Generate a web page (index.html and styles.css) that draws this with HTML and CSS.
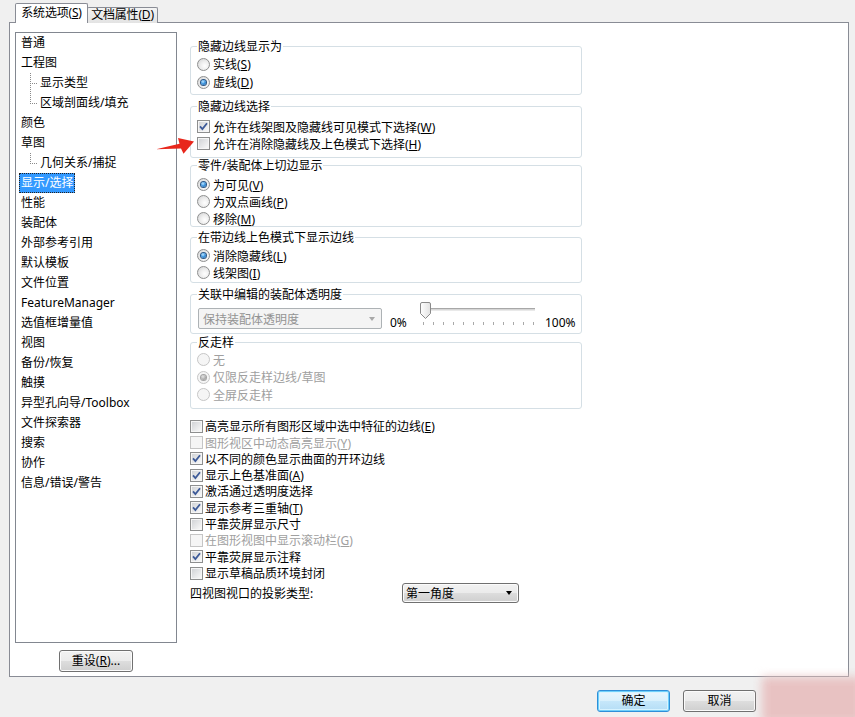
FILE: index.html
```html
<!DOCTYPE html>
<html lang="zh-CN">
<head>
<meta charset="utf-8">
<title>系统选项</title>
<link rel="stylesheet" href="styles.css">
</head>
<body>
<div class="window">
  <div class="tabs">
    <div class="tab active">系统选项(<u>S</u>)</div>
    <div class="tab">文档属性(<u>D</u>)</div>
  </div>
  <div class="panel">
    <div class="left">
      <ul class="tree">
        <li><span>普通</span></li>
        <li><span>工程图</span></li>
        <li class="child"><span>显示类型</span></li>
        <li class="child last"><span>区域剖面线/填充</span></li>
        <li><span>颜色</span></li>
        <li><span>草图</span></li>
        <li class="child last"><span>几何关系/捕捉</span></li>
        <li class="sel"><span>显示/选择</span></li>
        <li><span>性能</span></li>
        <li><span>装配体</span></li>
        <li><span>外部参考引用</span></li>
        <li><span>默认模板</span></li>
        <li><span>文件位置</span></li>
        <li><span>FeatureManager</span></li>
        <li><span>选值框增量值</span></li>
        <li><span>视图</span></li>
        <li><span>备份/恢复</span></li>
        <li><span>触摸</span></li>
        <li><span>异型孔向导/Toolbox</span></li>
        <li><span>文件探索器</span></li>
        <li><span>搜索</span></li>
        <li><span>协作</span></li>
        <li><span>信息/错误/警告</span></li>
      </ul>
      <button class="btn reset">重设(<u>R</u>)...</button>
    </div>

    <div class="content">
      <div class="grp g1">
        <div class="gt">隐藏边线显示为</div>
        <div class="opts">
          <div class="opt"><span class="radio"></span><span>实线(<u>S</u>)</span></div>
          <div class="opt"><span class="radio on"></span><span>虚线(<u>D</u>)</span></div>
        </div>
      </div>

      <div class="grp g2">
        <div class="gt">隐藏边线选择</div>
        <div class="opts">
          <div class="opt"><span class="chk"><svg width="9" height="9" viewBox="0 0 9 9"><path d="M1 4.3 L3.4 7 L8 1.2" fill="none" stroke="#3d5a98" stroke-width="1.8"/></svg></span><span>允许在线架图及隐藏线可见模式下选择(<u>W</u>)</span></div>
          <div class="opt"><span class="chk"></span><span>允许在消除隐藏线及上色模式下选择(<u>H</u>)</span></div>
        </div>
      </div>

      <div class="grp g3">
        <div class="gt">零件/装配体上切边显示</div>
        <div class="opts">
          <div class="opt"><span class="radio on"></span><span>为可见(<u>V</u>)</span></div>
          <div class="opt"><span class="radio"></span><span>为双点画线(<u>P</u>)</span></div>
          <div class="opt"><span class="radio"></span><span>移除(<u>M</u>)</span></div>
        </div>
      </div>

      <div class="grp g4">
        <div class="gt">在带边线上色模式下显示边线</div>
        <div class="opts">
          <div class="opt"><span class="radio on"></span><span>消除隐藏线(<u>L</u>)</span></div>
          <div class="opt"><span class="radio"></span><span>线架图(<u>I</u>)</span></div>
        </div>
      </div>

      <div class="grp g5">
        <div class="gt">关联中编辑的装配体透明度</div>
        <div class="trow">
          <div class="combo-dis"><span>保持装配体透明度</span><span class="tri gray"></span></div>
          <div class="pct pct0">0%</div>
          <div class="slider">
            <div class="track"></div>
            <div class="ticks"></div>
            <svg class="thumb" width="12" height="18" viewBox="0 0 12 18">
              <defs><linearGradient id="tg" x1="0" y1="0" x2="1" y2="0"><stop offset="0" stop-color="#ffffff"/><stop offset="1" stop-color="#e2e2e2"/></linearGradient></defs>
              <path d="M2 0.5 H9 Q10.5 0.5 10.5 2 V11.5 L5.5 16.5 L0.5 11.5 V2 Q0.5 0.5 2 0.5 Z" fill="url(#tg)" stroke="#8a8a8a"/>
            </svg>
          </div>
          <div class="pct pct100">100%</div>
        </div>
      </div>

      <div class="grp g6">
        <div class="gt">反走样</div>
        <div class="opts">
          <div class="opt dis"><span class="radio"></span><span>无</span></div>
          <div class="opt dis"><span class="radio on"></span><span>仅限反走样边线/草图</span></div>
          <div class="opt dis"><span class="radio"></span><span>全屏反走样</span></div>
        </div>
      </div>

      <div class="checks">
        <div class="crow"><span class="chk"></span><span>高亮显示所有图形区域中选中特征的边线(<u>E</u>)</span></div>
        <div class="crow dis"><span class="chk"></span><span>图形视区中动态高亮显示(<u>Y</u>)</span></div>
        <div class="crow"><span class="chk"><svg width="9" height="9" viewBox="0 0 9 9"><path d="M1 4.3 L3.4 7 L8 1.2" fill="none" stroke="#3d5a98" stroke-width="1.8"/></svg></span><span>以不同的颜色显示曲面的开环边线</span></div>
        <div class="crow"><span class="chk"><svg width="9" height="9" viewBox="0 0 9 9"><path d="M1 4.3 L3.4 7 L8 1.2" fill="none" stroke="#3d5a98" stroke-width="1.8"/></svg></span><span>显示上色基准面(<u>A</u>)</span></div>
        <div class="crow"><span class="chk"><svg width="9" height="9" viewBox="0 0 9 9"><path d="M1 4.3 L3.4 7 L8 1.2" fill="none" stroke="#3d5a98" stroke-width="1.8"/></svg></span><span>激活通过透明度选择</span></div>
        <div class="crow"><span class="chk"><svg width="9" height="9" viewBox="0 0 9 9"><path d="M1 4.3 L3.4 7 L8 1.2" fill="none" stroke="#3d5a98" stroke-width="1.8"/></svg></span><span>显示参考三重轴(<u>T</u>)</span></div>
        <div class="crow"><span class="chk"></span><span>平靠荧屏显示尺寸</span></div>
        <div class="crow dis"><span class="chk"></span><span>在图形视图中显示滚动栏(<u>G</u>)</span></div>
        <div class="crow"><span class="chk"><svg width="9" height="9" viewBox="0 0 9 9"><path d="M1 4.3 L3.4 7 L8 1.2" fill="none" stroke="#3d5a98" stroke-width="1.8"/></svg></span><span>平靠荧屏显示注释</span></div>
        <div class="crow"><span class="chk"></span><span>显示草稿品质环境封闭</span></div>
      </div>

      <div class="proj">
        <span class="proj-label">四视图视口的投影类型:</span>
        <div class="combo"><span>第一角度</span><span class="tri"></span></div>
      </div>
    </div>
  </div>

  <div class="footer">
    <button class="btn default">确定</button>
    <button class="btn">取消</button>
  </div>

  <svg class="arrow" width="42" height="20" viewBox="0 0 42 20">
    <path d="M1 13.2 L24.5 7.8 L23 2 L39 5.5 L28.5 17.8 L26 12.6 Z" fill="#e8271c"/>
  </svg>
  <div class="watermark"></div>
</div>
</body>
</html>
```
FILE: styles.css
```css
* { box-sizing: border-box; }

body {
  margin: 0;
  font-family: "Noto Sans", "Noto Sans CJK SC", sans-serif;
  font-size: 12px;
  color: #000;
}

u { text-decoration: underline; text-underline-offset: 1px; }

.window {
  width: 855px;
  height: 717px;
  background: #f0f0f0;
  position: relative;
  overflow: hidden;
}

/* tabs */
.tabs {
  display: flex;
  align-items: flex-end;
  height: 23px;
  padding-left: 15px;
}
.tab {
  width: 71px;
  height: 16px;
  margin-left: -1px;
  border: 1px solid #898c95;
  border-bottom: none;
  border-radius: 2px 2px 0 0;
  background: linear-gradient(#f4f4f4, #e3e3e3);
  text-align: center;
  line-height: 14px;
  white-space: nowrap;
  letter-spacing: -0.2px;
}
.tab.active {
  width: 73px;
  height: 20px;
  margin-left: 0;
  padding-top: 1px;
  line-height: 16px;
  background: #fff;
  position: relative;
  z-index: 1;
}

/* main panel */
.panel {
  margin: -1px 0 0 9px;
  width: 840px;
  height: 655px;
  border: 1px solid #898c95;
  background: #fff;
  display: flex;
  align-items: flex-start;
  padding-left: 5px;
}

.left {
  margin-top: 9px;
  width: 162px;
  display: flex;
  flex-direction: column;
}

.tree {
  height: 611px;
  margin: 0;
  padding: 0 0 0 3px;
  list-style: none;
  border: 1px solid #828790;
}
.tree li {
  height: 20px;
  position: relative;
  white-space: nowrap;
}
.tree li span {
  display: inline-block;
  height: 20px;
  line-height: 18px;
  padding: 0 1px;
  border: 1px solid transparent;
}
.tree li.sel span {
  background: #3399ff;
  color: #fff;
  border: 1px dotted #222;
}
.tree li.child { padding-left: 19px; }
.tree li.child::before {
  content: "";
  position: absolute;
  left: 11px;
  top: 0;
  bottom: 0;
  width: 1px;
  background: repeating-linear-gradient(#8a8a8a 0 1px, transparent 1px 2px);
}
.tree li.child.last::before { bottom: auto; height: 11px; }
.tree li.child::after {
  content: "";
  position: absolute;
  left: 12px;
  top: 10px;
  width: 7px;
  height: 1px;
  background: repeating-linear-gradient(90deg, transparent 0 1px, #8a8a8a 1px 2px);
}

/* buttons */
.btn {
  width: 73px;
  height: 22px;
  padding: 0;
  border: 1px solid #707070;
  border-radius: 3px;
  background: linear-gradient(#f2f2f2 0%, #ebebeb 50%, #dddddd 51%, #cfcfcf 100%);
  box-shadow: inset 0 0 0 1px #fbfbfb;
  font: inherit;
  color: #000;
  line-height: 18px;
}
.btn.default {
  border-color: #2f8fd8;
  background: linear-gradient(#eaf6fd 0%, #d9f0fc 50%, #c6e7fa 51%, #b4ddf5 100%);
  box-shadow: inset 0 0 0 1px #6fd0fb, inset 0 0 0 2px #d8f3ff;
}
.reset {
  width: 74px;
  margin: 7px 0 0 44px;
}

/* right content */
.content {
  margin: 23px 0 0 13px;
  width: 392px;
}

.grp {
  border: 1px solid #d5dfe5;
  border-radius: 3px;
}
.gt {
  width: max-content;
  margin: -7px 0 0 6px;
  padding: 0 1px;
  background: #fff;
  line-height: 14px;
}
.opts { padding-left: 6px; }
.opt {
  display: flex;
  align-items: center;
  gap: 3px;
  height: 17px;
  white-space: nowrap;
}
.dis { color: #a0a0a0; }

.g1 { height: 49px; }
.g1 .opts { padding-top: 1px; }
.g1 .opt { height: 18px; }
.g2 { height: 52px; margin-top: 11px; }
.g2 .opts { padding-top: 4px; }
.g3 { height: 62px; margin-top: 7px; }
.g3 .opts { padding-top: 3px; }
.g4 { height: 46px; margin-top: 10px; }
.g4 .opts { padding-top: 2px; }
.g5 { height: 40px; margin-top: 11px; }
.g6 { height: 67px; margin-top: 8px; }
.g6 .opts { padding-top: 1px; }
.g6 .opt { height: 17.5px; }

/* radio */
.radio {
  flex: none;
  width: 13px;
  height: 13px;
  border-radius: 50%;
  border: 1px solid #8e8f8f;
  background: radial-gradient(circle at 62% 62%, #ffffff 0, #ededed 45%, #cfd0d1 100%);
  display: flex;
  align-items: center;
  justify-content: center;
}
.radio.on::after {
  content: "";
  width: 5px;
  height: 5px;
  border-radius: 50%;
  background: radial-gradient(circle at 40% 35%, #c3e8ff 0, #3f98e2 45%, #1a5a9c 100%);
  box-shadow: 0 0 0 1px #2a5685;
}
.dis .radio {
  border-color: #c6c6c6;
  background: #f5f5f5;
}
.dis .radio.on::after {
  background: radial-gradient(circle at 40% 35%, #e6e6e6 0, #a9a9a9 60%, #8f8f8f 100%);
  box-shadow: 0 0 0 1px #a3a3a3;
}

/* checkbox */
.chk {
  flex: none;
  width: 13px;
  height: 13px;
  padding: 1px;
  border: 1px solid #8e8f8f;
  background: linear-gradient(135deg, #d2d4d7, #f8f8f8) content-box, #f6f6f6;
  display: flex;
}
.chk svg { display: block; }
.dis .chk {
  border-color: #c5c5c5;
  background: #f5f5f5;
}

/* transparency row */
.trow {
  display: flex;
  align-items: flex-start;
  padding-left: 7px;
  height: 30px;
}
.combo-dis {
  width: 184px;
  height: 21px;
  margin-top: 6px;
  border: 1px solid #adb2b5;
  border-radius: 2px;
  background: #f4f4f4;
  color: #939393;
  display: flex;
  align-items: center;
  justify-content: space-between;
  padding: 0 6px 0 4px;
  white-space: nowrap;
}
.tri {
  width: 0;
  height: 0;
  border-left: 3.5px solid transparent;
  border-right: 3.5px solid transparent;
  border-top: 4px solid #000;
}
.tri.gray { border-top-color: #a8a8a8; }
.pct {
  margin-top: 14px;
  line-height: 14px;
  white-space: nowrap;
}
.pct0 { width: 30px; margin-left: 8px; }
.pct100 { margin-left: 10px; }
.slider {
  position: relative;
  width: 115px;
  height: 28px;
}
.track {
  margin: 6px 0 0 2px;
  height: 3px;
  border-top: 1px solid #a8a8a8;
  border-bottom: 1px solid #e9e9e9;
  background: #d6d6d6;
}
.ticks {
  position: absolute;
  left: 3px;
  top: 20px;
  width: 111px;
  height: 3px;
  background: repeating-linear-gradient(90deg, #a9a9a9 0 1px, transparent 1px 10px);
}
.thumb {
  position: absolute;
  left: 0;
  top: 0;
}

/* checklist */
.checks { margin-top: 9px; }
.crow {
  display: flex;
  align-items: center;
  gap: 2px;
  height: 16.33px;
  white-space: nowrap;
}

.proj {
  display: flex;
  align-items: center;
  height: 20px;
  margin-top: 2px;
}
.proj-label { width: 212px; white-space: nowrap; }
.combo {
  width: 117px;
  height: 20px;
  border: 1px solid #707070;
  border-radius: 3px;
  background: linear-gradient(#f2f2f2 0%, #ebebeb 50%, #dddddd 51%, #cfcfcf 100%);
  box-shadow: inset 0 0 0 1px #fbfbfb;
  display: flex;
  align-items: center;
  justify-content: space-between;
  padding: 0 6px 0 3px;
}

/* footer */
.footer {
  display: flex;
  justify-content: flex-end;
  gap: 13px;
  padding-right: 99px;
  margin-top: 13px;
}

/* overlays */
.arrow {
  position: absolute;
  left: 155px;
  top: 136px;
}
.watermark {
  position: absolute;
  left: 762px;
  top: 677px;
  width: 100px;
  height: 46px;
  background: #e8c2c2;
  filter: blur(5px);
}
```
